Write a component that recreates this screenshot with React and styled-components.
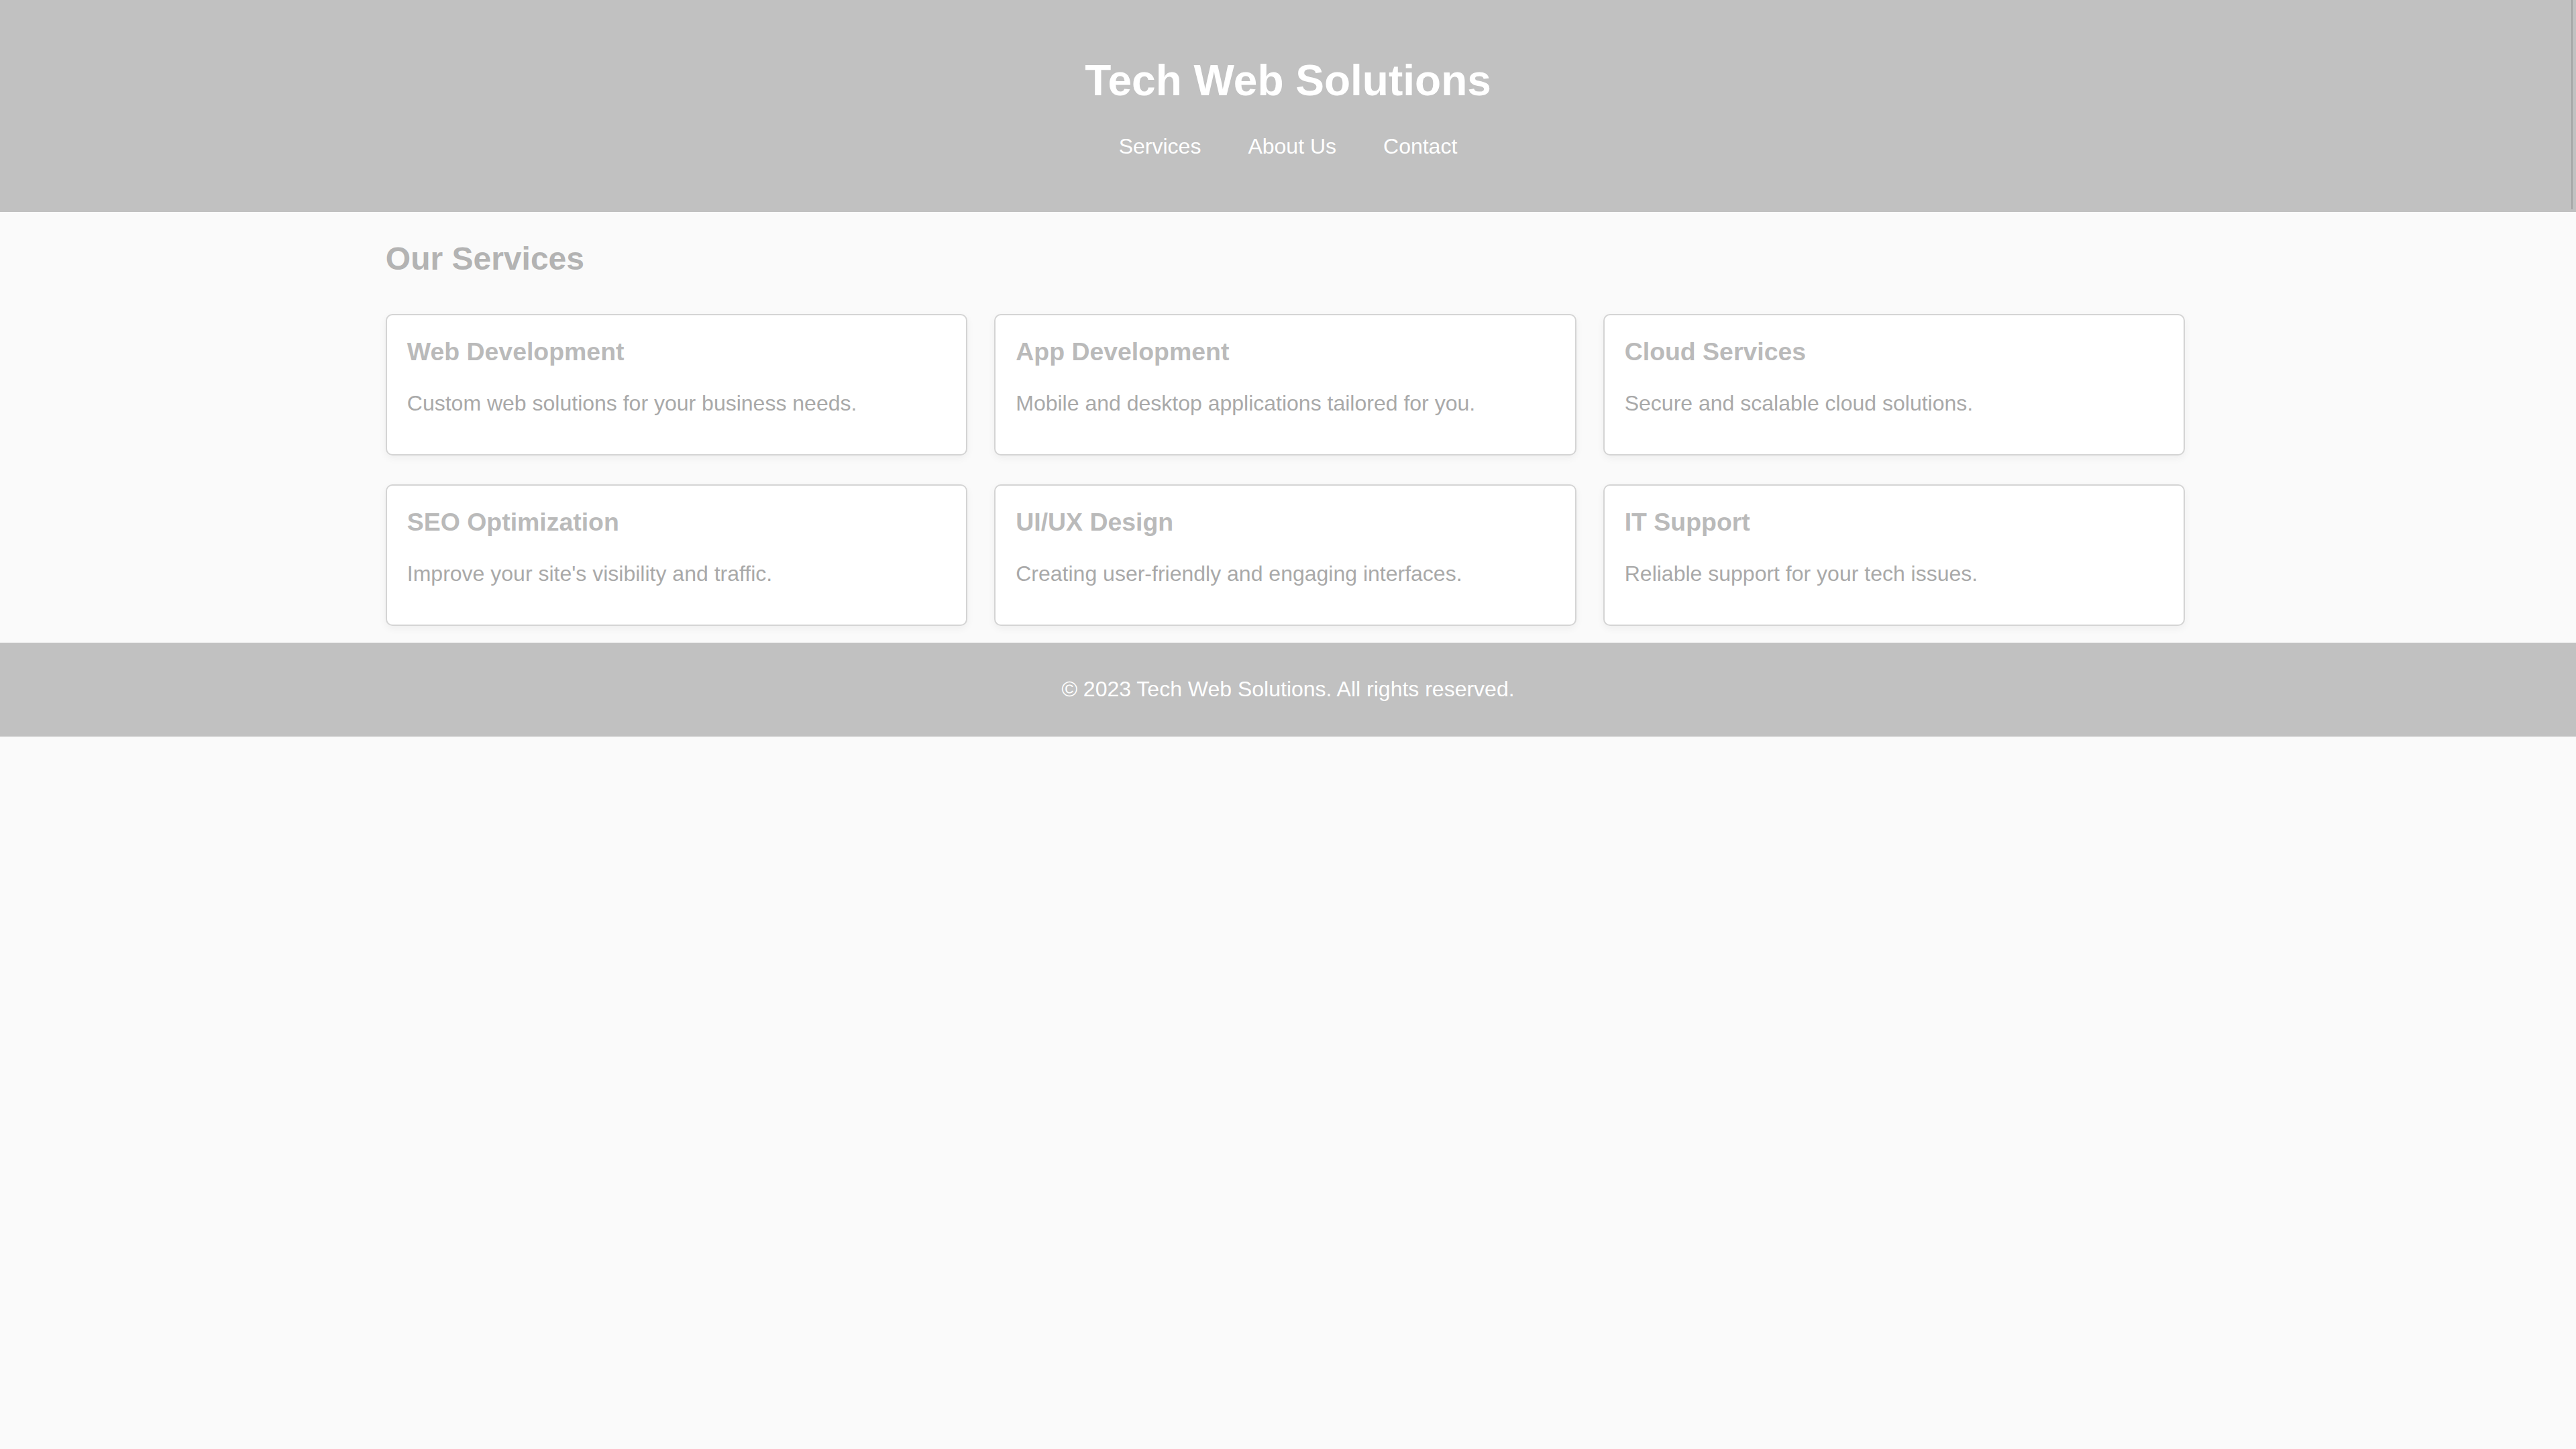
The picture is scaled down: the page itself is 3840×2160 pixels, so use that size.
import React from "react";
import styled, { createGlobalStyle } from "styled-components";

const GlobalStyle = createGlobalStyle`
  html, body {
    margin: 0;
    padding: 0;
    background: #fafafa;
    font-family: "Liberation Sans", Arial, Helvetica, sans-serif;
  }
  * { box-sizing: border-box; }
`;

const Header = styled.header`
  position: relative;
  background: #c1c1c1;
  color: #ffffff;
  text-align: center;
  padding: 83px 0 79px;
  &::after {
    content: "";
    position: absolute;
    top: 0;
    right: 5px;
    bottom: 4px;
    width: 2px;
    background: #a3a3a3;
  }
`;

const Title = styled.h1`
  margin: 0 0 43px;
  font-size: 64px;
  line-height: 74px;
  font-weight: 700;
`;

const Nav = styled.nav`
  display: flex;
  justify-content: center;
  gap: 70px;
`;

const NavLink = styled.a`
  color: #ffffff;
  text-decoration: none;
  font-size: 32px;
  line-height: 37px;
`;

const MainArea = styled.div`
  padding-right: 8px;
`;

const Main = styled.main`
  width: 70%;
  margin: 0 auto;
  padding: 42px 0 25px;
`;

const SectionTitle = styled.h2`
  margin: 0 0 55px;
  font-size: 48px;
  line-height: 55px;
  font-weight: 700;
  color: #b3b3b3;
`;

const Grid = styled.div`
  display: grid;
  grid-template-columns: repeat(3, 1fr);
  column-gap: 40px;
  row-gap: 43px;
`;

const Card = styled.div`
  background: #ffffff;
  border: 2px solid #d4d4d4;
  border-radius: 10px;
  box-shadow: 0 4px 12px rgba(0, 0, 0, 0.05);
  padding: 33px 30px 56px;
  min-height: 211px;
`;

const CardTitle = styled.h3`
  margin: 0 0 37px;
  font-size: 37.44px;
  line-height: 43px;
  font-weight: 700;
  color: #bababa;
`;

const CardText = styled.p`
  margin: 0;
  font-size: 32px;
  line-height: 37px;
  color: #a9a9a9;
`;

const Footer = styled.footer`
  background: #c1c1c1;
  color: #ffffff;
  text-align: center;
  padding: 51px 0 52px;
`;

const FooterText = styled.p`
  margin: 0;
  font-size: 32px;
  line-height: 37px;
`;

const services = [
  { title: "Web Development", text: "Custom web solutions for your business needs." },
  { title: "App Development", text: "Mobile and desktop applications tailored for you." },
  { title: "Cloud Services", text: "Secure and scalable cloud solutions." },
  { title: "SEO Optimization", text: "Improve your site's visibility and traffic." },
  { title: "UI/UX Design", text: "Creating user-friendly and engaging interfaces." },
  { title: "IT Support", text: "Reliable support for your tech issues." },
];

export default function App() {
  return (
    <>
      <GlobalStyle />
      <Header>
        <Title>Tech Web Solutions</Title>
        <Nav>
          <NavLink href="#services">Services</NavLink>
          <NavLink href="#about">About Us</NavLink>
          <NavLink href="#contact">Contact</NavLink>
        </Nav>
      </Header>
      <MainArea>
        <Main id="services">
          <SectionTitle>Our Services</SectionTitle>
          <Grid>
            {services.map((s) => (
              <Card key={s.title}>
                <CardTitle>{s.title}</CardTitle>
                <CardText>{s.text}</CardText>
              </Card>
            ))}
          </Grid>
        </Main>
      </MainArea>
      <Footer>
        <FooterText>© 2023 Tech Web Solutions. All rights reserved.</FooterText>
      </Footer>
    </>
  );
}
